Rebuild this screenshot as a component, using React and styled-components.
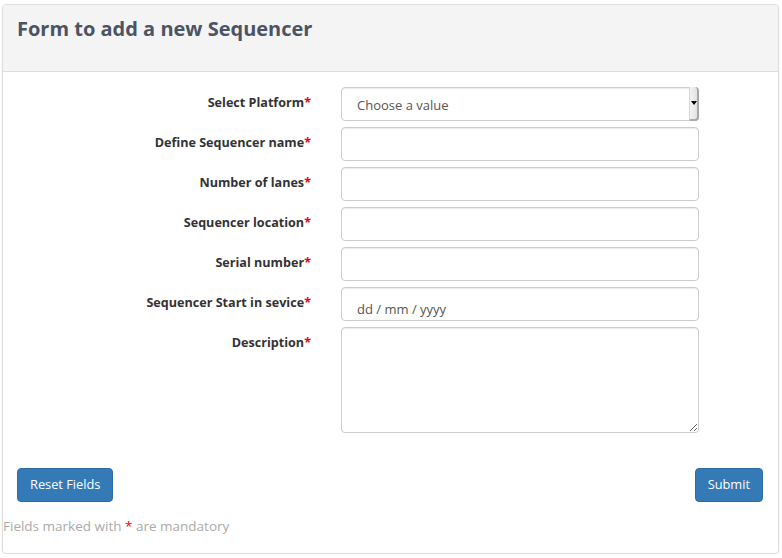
import React from 'react';
import styled, { createGlobalStyle } from 'styled-components';

const GlobalStyle = createGlobalStyle`
  body {
    margin: 0;
    background: #fff;
    font-family: "Open Sans", "Liberation Sans", sans-serif;
    color: #333;
  }
  * { box-sizing: border-box; }
`;

const Panel = styled.div`
  margin: 4px 3px 0 2px;
  height: 550px;
  border: 1px solid #ddd;
  border-radius: 4px;
  box-shadow: 0 1px 2px rgba(0, 0, 0, 0.08);
  display: flex;
  flex-direction: column;
  overflow: hidden;
`;

const Header = styled.div`
  height: 67px;
  background: #f4f4f4;
  border-bottom: 1px solid #ddd;
  padding: 11px 14px 0;
`;

const Title = styled.h3`
  margin: 0;
  font-size: 20px;
  font-weight: 700;
  color: #4c5364;
  line-height: 26px;
`;

const Body = styled.form`
  padding-top: 15px;
  display: flex;
  flex-direction: column;
  gap: 6px;
`;

const Row = styled.div`
  display: flex;
  align-items: flex-start;
`;

const Label = styled.label`
  width: 308px;
  text-align: right;
  font-size: 12.6px;
  font-weight: 700;
  color: #333;
  line-height: 20px;
  padding-top: 6px;
  margin-right: 30px;
`;

const Star = styled.span`
  color: #e00;
`;

const fieldBase = `
  width: 358px;
  border: 1px solid #ccc;
  border-radius: 4px;
  background: #fff;
  box-shadow: inset 0 1px 1px rgba(0, 0, 0, 0.075);
  font-family: "Open Sans", "Liberation Sans", sans-serif;
  font-size: 13px;
  color: #555;
  outline: none;
`;

const Input = styled.input`
  ${fieldBase}
  height: 34px;
  padding: ${p => (p.$low ? '9px 15px 0' : '0 15px')};
  &::placeholder { color: #555; }
`;

const SelectBox = styled.div`
  ${fieldBase}
  height: 34px;
  display: flex;
  align-items: center;
  padding-left: 15px;
  position: relative;
`;

const SelectText = styled.span`
  flex: 1;
  padding-top: 1px;
`;

const Arrow = styled.span`
  width: 10px;
  align-self: stretch;
  margin: -1px -1px -1px 0;
  background: linear-gradient(to right, #f3f3f3, #e2e2e2);
  border-left: 1px solid #d6d6d6;
  border-right: 2px solid #a8a8a8;
  border-bottom: 2px solid #a8a8a8;
  display: flex;
  align-items: center;
  justify-content: center;
  border-radius: 0 4px 4px 0;
  &::after {
    content: '';
    border-left: 3px solid transparent;
    border-right: 3px solid transparent;
    border-top: 4px solid #000;
  }
`;

const TextArea = styled.textarea`
  ${fieldBase}
  height: 106px;
  resize: vertical;
  padding: 6px 12px;
`;

const Actions = styled.div`
  display: flex;
  justify-content: space-between;
  padding: 0 15px 0 14px;
  margin-top: 35px;
`;

const Button = styled.button`
  height: 34px;
  padding: 0 12px 2px;
  background: #337ab7;
  border: 1px solid #2e6da4;
  border-radius: 4px;
  color: #fff;
  font-family: "Open Sans", "Liberation Sans", sans-serif;
  font-size: 12.8px;
  cursor: pointer;
`;

const Note = styled.p`
  margin: 14px 0 0;
  font-size: 13.5px;
  color: #aaa;
  line-height: 20px;
`;

const fields = [
  { label: 'Define Sequencer name' },
  { label: 'Number of lanes' },
  { label: 'Sequencer location' },
  { label: 'Serial number' },
];

const App = () => {
  return (
    <>
      <GlobalStyle />
      <Panel>
        <Header>
          <Title>Form to add a new Sequencer</Title>
        </Header>
        <Body onSubmit={e => e.preventDefault()}>
          <Row>
            <Label>Select Platform<Star>*</Star></Label>
            <SelectBox>
              <SelectText>Choose a value</SelectText>
              <Arrow />
            </SelectBox>
          </Row>
          {fields.map(f => (
            <Row key={f.label}>
              <Label>{f.label}<Star>*</Star></Label>
              <Input type="text" />
            </Row>
          ))}
          <Row>
            <Label>Sequencer Start in sevice<Star>*</Star></Label>
            <Input type="text" placeholder="dd / mm / yyyy" $low />
          </Row>
          <Row>
            <Label>Description<Star>*</Star></Label>
            <TextArea />
          </Row>
        </Body>
        <Actions>
          <Button type="button">Reset Fields</Button>
          <Button type="submit">Submit</Button>
        </Actions>
        <Note>Fields marked with <Star>*</Star> are mandatory</Note>
      </Panel>
    </>
  );
};

export default App;
